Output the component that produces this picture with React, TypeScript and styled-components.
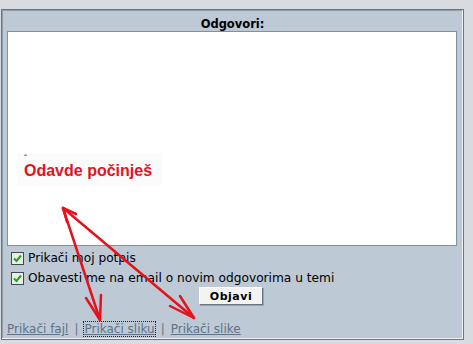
import styled, { createGlobalStyle } from "styled-components";

const GlobalStyle = createGlobalStyle`
  html, body {
    margin: 0;
    background: #d8dbdf;
  }
  body {
    font-family: "DejaVu Sans", Verdana, sans-serif;
  }
`;

const Page = styled.div`
  position: relative;
  width: 473px;
  height: 344px;
  padding: 9px 0 0 1px;
  box-sizing: border-box;
`;

const Panel = styled.form`
  width: 463px;
  height: 331px;
  box-sizing: border-box;
  background: #bdc9d5;
  border: 1px solid #66768a;
  box-shadow: inset -1px -1px 0 #eef3f8, inset 1px 1px 0 #8e9dac;
  display: flex;
  flex-direction: column;
`;

const Title = styled.div`
  height: 21px;
  padding-top: 8px;
  box-sizing: border-box;
  text-align: center;
  font-size: 11.5px;
  line-height: 13px;
  font-weight: bold;
  color: #000;
`;

const Editor = styled.div`
  position: relative;
  margin: 0 0 0 5px;
  width: 450px;
  height: 215px;
  box-sizing: border-box;
  background: #fff;
  border: 1px solid #7f91a3;
`;

const Hint = styled.div`
  position: absolute;
  left: 9px;
  top: 121px;
  width: 145px;
  height: 32px;
  box-sizing: border-box;
  padding: 10px 0 0 7px;
  background: #fbfbfb;
  color: #e0141e;
  font-family: "Liberation Sans", Arial, sans-serif;
  font-weight: bold;
  font-size: 16px;
  line-height: 16px;
  white-space: nowrap;
`;

const Caret = styled.span`
  position: absolute;
  left: 7px;
  top: 1px;
  font-size: 9px;
  line-height: 8px;
`;

const Options = styled.div`
  display: flex;
  flex-direction: column;
  gap: 2px;
  padding: 3px 0 0 9px;
`;

const Row = styled.label`
  display: flex;
  align-items: center;
  gap: 4px;
  height: 18px;
  font-size: 12.2px;
  color: #000;
`;

const Check = styled.span`
  width: 11px;
  height: 11px;
  border: 1px solid #3d4a55;
  background: #e6f0e0;
  display: flex;
  align-items: center;
  justify-content: center;
  svg {
    width: 9px;
    height: 9px;
  }
`;

const Submit = styled.button`
  align-self: center;
  margin: -2px 0 0 -12px;
  width: 64px;
  height: 18px;
  padding: 0;
  background: #f3f3f1;
  border: 1px solid;
  border-color: #ffffff #6b737c #6b737c #ffffff;
  box-shadow: 1px 1px 0 #9aa3ad;
  font-family: "DejaVu Sans", Verdana, sans-serif;
  font-weight: bold;
  font-size: 11px;
  letter-spacing: 0.5px;
  color: #000;
`;

const Links = styled.div`
  margin-top: 17px;
  padding-left: 5px;
  font-size: 12px;
  line-height: 14px;
  color: #5f7287;
  display: flex;
  gap: 6px;
`;

const Link = styled.a<{ $focused?: boolean }>`
  color: #5f7287;
  text-decoration: underline;
  outline: ${(p) => (p.$focused ? "1px dotted #222" : "none")};
`;

const Separator = styled.span`
  margin-right: 6px;
`;

const Arrows = styled.svg`
  position: absolute;
  left: 0;
  top: 0;
  pointer-events: none;
`;

const options = [
  "Prikači moj potpis",
  "Obavesti me na email o novim odgovorima u temi",
];

const links = ["Prikači fajl", "Prikači sliku", "Prikači slike"];

export default function App() {
  return (
    <>
      <GlobalStyle />
      <Page>
        <Panel onSubmit={(e) => e.preventDefault()}>
          <Title>Odgovori:</Title>
          <Editor>
            <Hint>
              <Caret>ˆ</Caret>
              Odavde počinješ
            </Hint>
          </Editor>
          <Options>
            {options.map((text) => (
              <Row key={text}>
                <Check>
                  <svg viewBox="0 0 9 9">
                    <path d="M1 4.5 L3.5 7 L8 1.5" fill="none" stroke="#2a9a2a" strokeWidth="2" />
                  </svg>
                </Check>
                {text}
              </Row>
            ))}
            <Submit type="submit">Objavi</Submit>
          </Options>
          <Links>
            {links.map((text, i) => (
              <span key={text}>
                {i > 0 && <Separator>|</Separator>}
                <Link href="#" $focused={i === 1}>
                  {text}
                </Link>
              </span>
            ))}
          </Links>
        </Panel>
        <Arrows width="473" height="344" viewBox="0 0 473 344">
          <g stroke="#e5121c" strokeWidth="2.5" fill="none" strokeLinecap="round">
            <path d="M63 208 L100 320" />
            <path d="M63 208 L194 318" />
            <path d="M63 208 L67 222 M63 208 L76 214" />
            <path d="M100 320 L86 298 M100 320 L101 295" />
            <path d="M194 318 L170 306 M194 318 L180 296" />
          </g>
        </Arrows>
      </Page>
    </>
  );
}
